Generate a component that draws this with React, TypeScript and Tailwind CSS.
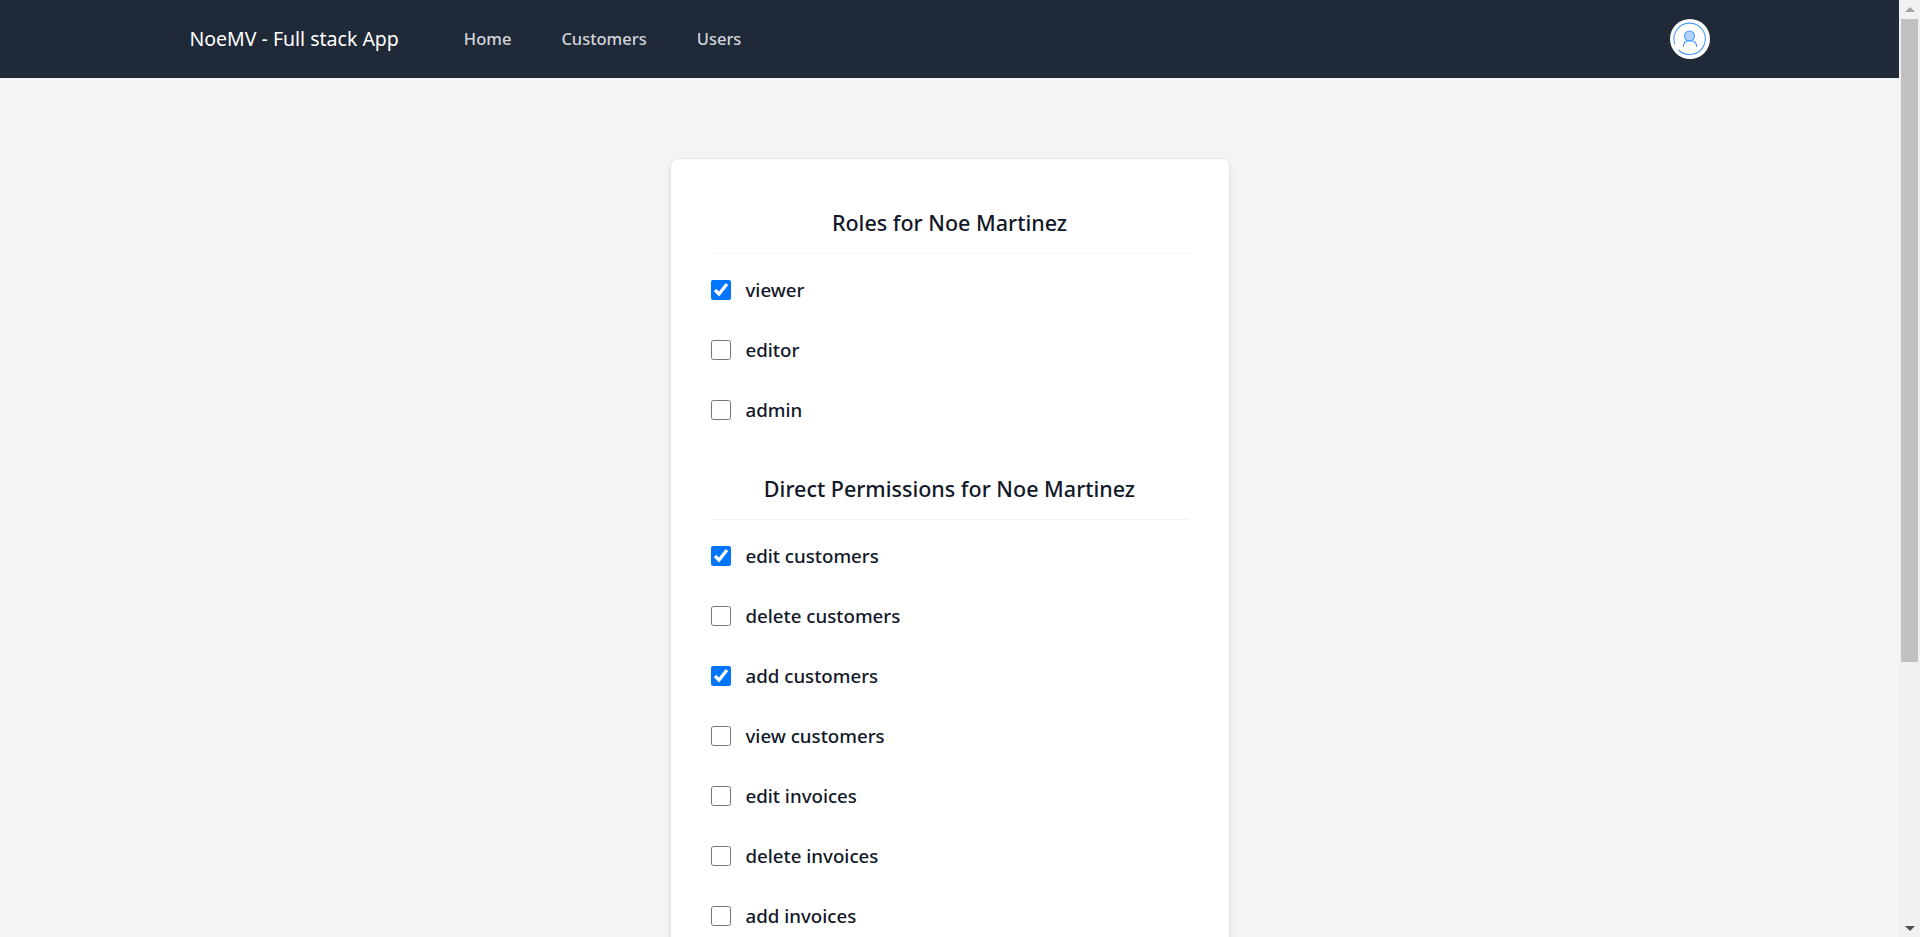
import React from "react";

const roles = [
  { name: "viewer", checked: true },
  { name: "editor", checked: false },
  { name: "admin", checked: false },
];

const permissions = [
  { name: "edit customers", checked: true },
  { name: "delete customers", checked: false },
  { name: "add customers", checked: true },
  { name: "view customers", checked: false },
  { name: "edit invoices", checked: false },
  { name: "delete invoices", checked: false },
  { name: "add invoices", checked: false },
  { name: "view invoices", checked: false },
];

function Avatar() {
  return (
    <svg viewBox="0 0 40 40" className="h-10 w-10">
      <circle cx="20" cy="20" r="20" fill="#ffffff" />
      <path
        d="M5 25.5A15.7 15.7 0 1 1 8.6 31"
        fill="none"
        stroke="#4f9bfb"
        strokeWidth="1.1"
      />
      <circle cx="19.5" cy="17" r="5" fill="#b5d3fd" stroke="#4f9bfb" strokeWidth="1.1" />
      <path d="M13.3 28C13.3 24 15.5 21.6 19.8 21.6S26.7 24 26.7 28" fill="none" stroke="#4f9bfb" strokeWidth="1.1" />
    </svg>
  );
}

function Row({ name, checked }: { name: string; checked: boolean }) {
  return (
    <label className="flex h-[60px] items-center gap-[15px]">
      <input type="checkbox" defaultChecked={checked} className="m-0 h-5 w-5" />
      <span className="text-[18.7px] font-medium text-[#111827]">{name}</span>
    </label>
  );
}

function Section({ title, items }: { title: string; items: typeof roles }) {
  return (
    <section>
      <h2 className="border-b border-gray-100 pb-4 text-center text-[21.5px] font-medium leading-[28px] text-[#111827]">
        {title}
      </h2>
      <div className="mt-[6px]">
        {items.map((item) => (
          <Row key={item.name} name={item.name} checked={item.checked} />
        ))}
      </div>
    </section>
  );
}

function Scrollbar() {
  return (
    <div className="flex h-full w-[21px] shrink-0 flex-col items-center bg-[#f1f1f1] px-[2px]">
      <div className="flex h-[19px] items-center justify-center">
        <span className="h-0 w-0 border-x-[5px] border-b-[5px] border-x-transparent border-b-[#a3a3a3]" />
      </div>
      <div className="h-[643px] w-[17px] bg-[#c1c1c1]" />
      <div className="flex-1" />
      <div className="flex h-[19px] items-start justify-center pt-2">
        <span className="h-0 w-0 border-x-[5px] border-t-[5px] border-x-transparent border-t-[#505050]" />
      </div>
    </div>
  );
}

export default function App() {
  return (
    <div className="flex h-[937px] overflow-hidden bg-[#f3f4f6] font-['Noto_Sans','Open_Sans',sans-serif]">
      <div className="h-full min-w-0 flex-1 overflow-hidden">
        <nav className="h-[78px] bg-[#1f2937]">
          <div className="mx-auto flex h-full max-w-[1536px] items-center px-2">
            <span className="text-[19.5px] text-white">NoeMV - Full stack App</span>
            <div className="ml-[65px] flex gap-[50px] text-[16.5px] font-medium text-[#d1d5db]">
              <a>Home</a>
              <a>Customers</a>
              <a>Users</a>
            </div>
            <div className="ml-auto">
              <Avatar />
            </div>
          </div>
        </nav>
        <main className="flex justify-center pt-[80px]">
          <div className="w-[560px] rounded-lg border border-gray-200 bg-white px-10 pt-[50px] pb-10 shadow-md">
            <Section title="Roles for Noe Martinez" items={roles} />
            <div className="mt-[35px]">
              <Section title="Direct Permissions for Noe Martinez" items={permissions} />
            </div>
          </div>
        </main>
      </div>
      <Scrollbar />
    </div>
  );
}
